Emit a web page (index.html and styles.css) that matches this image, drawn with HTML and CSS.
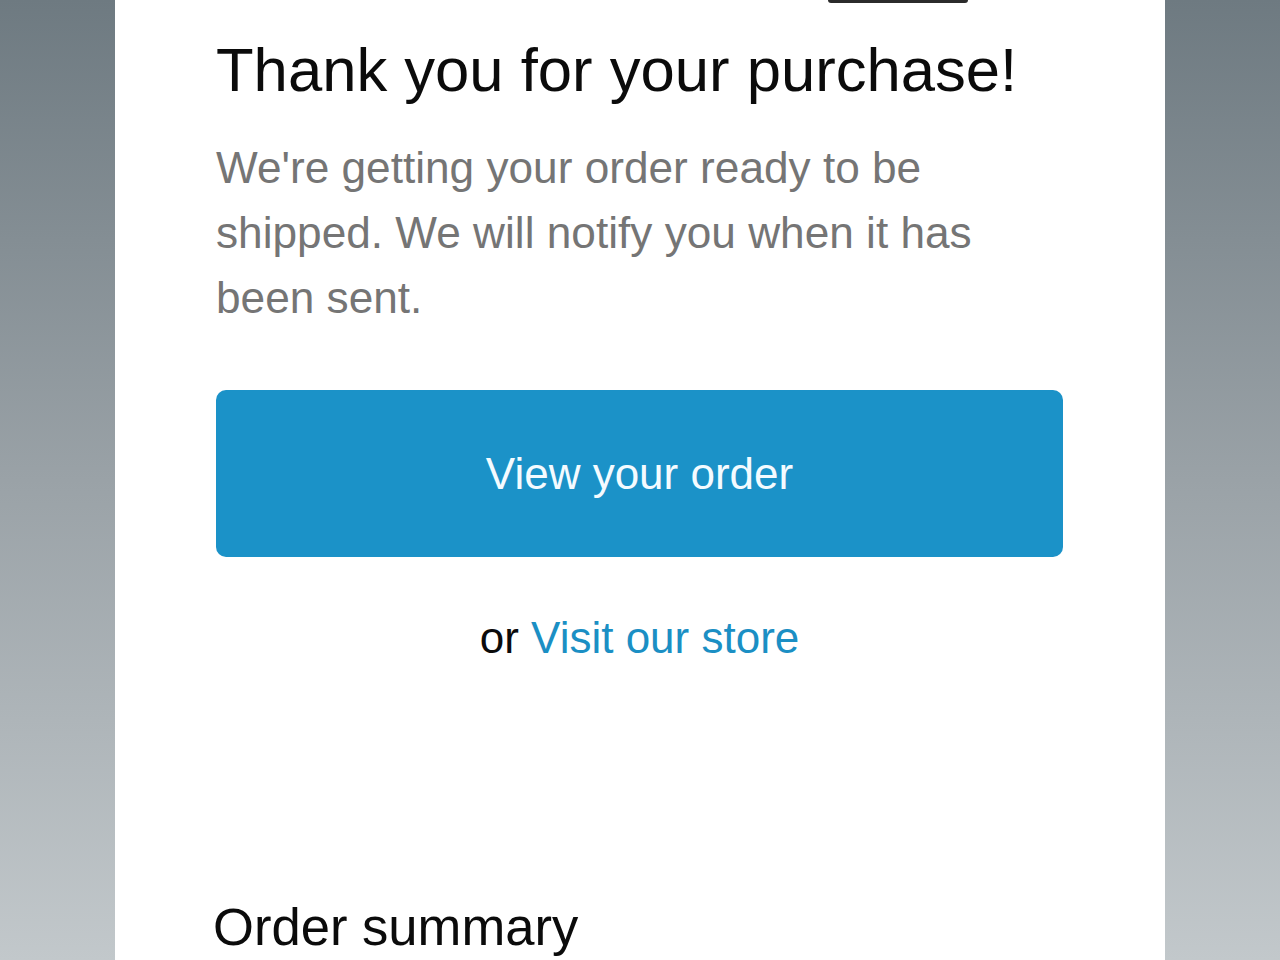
FILE: index.html
```html
<!DOCTYPE html>
<html lang="en">
<head>
<meta charset="utf-8">
<title>Thank you for your purchase</title>
<link rel="stylesheet" href="styles.css">
</head>
<body>
  <main class="card">
    <div class="top-row"><span class="top-pill"></span></div>
    <h1 class="title">Thank you for your purchase!</h1>
    <p class="lead">We're getting your order ready to be shipped. We will notify you when it has been sent.</p>
    <a class="btn" href="#">View your order</a>
    <p class="alt">or <a class="link" href="#">Visit our store</a></p>
    <h2 class="summary">Order summary</h2>
  </main>
</body>
</html>
```

FILE: styles.css
```css
html, body {
  margin: 0;
  padding: 0;
  height: 100%;
}
body {
  background: linear-gradient(180deg, #6e7a81 0%, #9aa2a7 50%, #c2c8cb 100%);
  font-family: "Liberation Sans", Arial, sans-serif;
  overflow: hidden;
}
.card {
  width: 1050px;
  height: 960px;
  margin: 0 auto;
  background: #ffffff;
  box-sizing: border-box;
  padding: 0 102px 0 101px;
  display: flex;
  flex-direction: column;
}
.top-row {
  display: flex;
  height: 3px;
}
.top-pill {
  display: block;
  margin-left: 612px;
  width: 140px;
  height: 3px;
  background: #2b2b2b;
  border-radius: 0 0 8px 8px;
}
.title {
  margin: 31px 0 0;
  font-size: 61.6px;
  line-height: 72px;
  font-weight: 400;
  color: #0b0b0b;
  white-space: nowrap;
}
.lead {
  margin: 29px 0 0;
  font-size: 44.2px;
  line-height: 65px;
  color: #757575;
}
.btn {
  margin-top: 60px;
  height: 167px;
  display: flex;
  align-items: center;
  justify-content: center;
  background: #1b92c8;
  border-radius: 10px;
  color: #f4fbff;
  font-size: 44px;
  text-decoration: none;
}
.alt {
  margin: 48px 0 0;
  text-align: center;
  font-size: 44px;
  line-height: 65px;
  color: #0b0b0b;
}
.link {
  color: #1b8fc4;
  text-decoration: none;
}
.summary {
  margin: 227px 0 0 -3px;
  font-size: 52.6px;
  line-height: 60px;
  font-weight: 400;
  color: #0b0b0b;
}
```
